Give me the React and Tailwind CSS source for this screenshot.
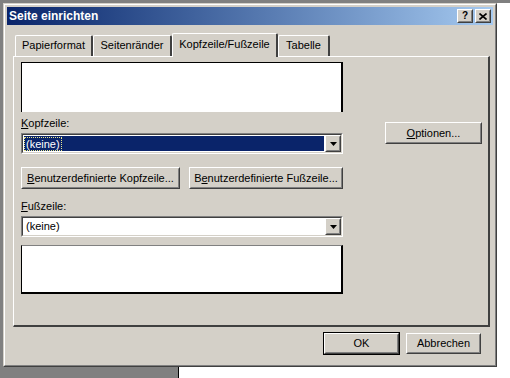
import React from "react";

const Raised = ({ className = "", children }) => (
  <div className={`flex border border-t-white border-l-white border-r-[#404040] border-b-[#404040] bg-[#d4d0c8] ${className}`}>
    <div className="flex flex-1 items-center justify-center border border-t-[#d4d0c8] border-l-[#d4d0c8] border-r-[#808080] border-b-[#808080]">
      {children}
    </div>
  </div>
);

const Arrow = () => (
  <svg width="7" height="4" viewBox="0 0 7 4">
    <path d="M0 0H7L3.5 4Z" fill="#000" />
  </svg>
);

const Combo = ({ selected }) => (
  <div className="flex h-[21px] w-[322px] border border-t-[#808080] border-l-[#808080] border-r-white border-b-white">
    <div className="flex flex-1 border border-t-[#404040] border-l-[#404040] border-r-[#d4d0c8] border-b-[#d4d0c8] bg-white">
      <div className="flex flex-1 items-center p-[1px]">
        {selected ? (
          <div className="flex h-full flex-1 items-center bg-[#0a246a]">
            <span className="border border-dotted border-[#e8e890] px-[1px] leading-[12px] text-white">(keine)</span>
          </div>
        ) : (
          <span className="pl-[2px]">(keine)</span>
        )}
      </div>
      <Raised className="w-[16px]">
        <Arrow />
      </Raised>
    </div>
  </div>
);

const Tab = ({ label, active, w }) =>
  active ? (
    <div className={`relative z-10 -mb-[1px] flex h-[24px] ${w} items-start justify-center rounded-t-[2px] border-t border-l border-white border-r-2 border-r-[#404040] bg-[#d4d0c8] pt-[4px]`}>
      {label}
    </div>
  ) : (
    <div className={`flex h-[21px] ${w} items-start justify-center rounded-t-[2px] border-t border-l border-white border-r-2 border-r-[#404040] pt-[3px]`}>
      {label}
    </div>
  );

export default function App() {
  return (
    <div
      className="flex h-[378px] w-[510px] flex-col overflow-hidden bg-white text-[11px] leading-[13px] text-black"
      style={{ fontFamily: '"Liberation Sans", Arial, sans-serif' }}
    >
      <div className="h-[3px] bg-[#808080]" />
      <div className="flex">
        <div className="w-[3px] bg-[#808080]" />
        {/* dialog */}
        <div className="flex h-[364px] w-[494px] border border-t-[#d4d0c8] border-l-[#d4d0c8] border-r-[#404040] border-b-[#404040] bg-[#d4d0c8]">
          <div className="flex flex-1 flex-col border border-t-white border-l-white border-r-[#808080] border-b-[#808080] p-[2px]">
            <div className="flex h-[18px] items-center bg-gradient-to-r from-[#0a246a] to-[#a6caf0] pl-[2px] pr-[2px]">
              <span className="flex-1 text-[12px] font-bold text-white">Seite einrichten</span>
              <Raised className="h-[14px] w-[16px]">
                <span className="text-[10px] font-bold leading-[10px]">?</span>
              </Raised>
              <Raised className="ml-[2px] h-[14px] w-[16px]">
                <svg width="8" height="7" viewBox="0 0 8 7">
                  <path d="M0.5 0.5L7.5 6.5M7.5 0.5L0.5 6.5" stroke="#000" strokeWidth="1.6" />
                </svg>
              </Raised>
            </div>

            <div className="mt-[8px] flex h-[23px] items-end pl-[8px]">
              <Tab label="Papierformat" w="w-[78px]" />
              <Tab label="Seitenränder" w="w-[79px]" />
              <Tab label="Kopfzeile/Fußzeile" w="w-[106px]" active />
              <Tab label="Tabelle" w="w-[52px]" />
            </div>

            <div className="ml-[6px] flex h-[271px] w-[477px] border-t border-l border-white border-r-2 border-b-2 border-r-[#404040] border-b-[#404040]">
              <div className="flex flex-col pl-[7px] pt-[5px]">
                <div className="h-[50px] w-[322px] border-t border-l border-r-2 border-black bg-white" />
                <div className="mt-[5px] mb-[2px] h-[14px]">
                  <span className="underline">K</span>opfzeile:
                </div>
                <Combo selected />
                <div className="mt-[13px] flex h-[22px] justify-between">
                  <Raised className="w-[159px]">
                    <span>
                      <span className="underline">B</span>enutzerdefinierte Kopfzeile...
                    </span>
                  </Raised>
                  <Raised className="w-[154px]">
                    <span>
                      B<span className="underline">e</span>nutzerdefinierte Fußzeile...
                    </span>
                  </Raised>
                </div>
                <div className="mt-[11px] mb-[2px] h-[14px]">
                  <span className="underline">F</span>ußzeile:
                </div>
                <Combo />
                <div className="mt-[8px] h-[49px] w-[322px] border-t border-l border-r-2 border-b-2 border-black border-t-[#808080] bg-white" />
              </div>
              <div className="ml-[42px] pt-[65px]">
                <Raised className="h-[22px] w-[97px]">
                  <span>
                    <span className="underline">O</span>ptionen...
                  </span>
                </Raised>
              </div>
            </div>

            <div className="mt-[5px] flex justify-end gap-[6px] pr-[12px]">
              <div className="flex h-[23px] w-[77px] border border-black">
                <Raised className="flex-1">OK</Raised>
              </div>
              <Raised className="mt-[1px] h-[21px] w-[75px]">Abbrechen</Raised>
            </div>
          </div>
        </div>
        <div className="flex-1 bg-white" />
      </div>
      <div className="flex h-[11px]">
        <div className="w-[178px] bg-[#808080]" />
        <div className="w-[1px] bg-black" />
        <div className="flex-1 bg-white" />
      </div>
    </div>
  );
}
